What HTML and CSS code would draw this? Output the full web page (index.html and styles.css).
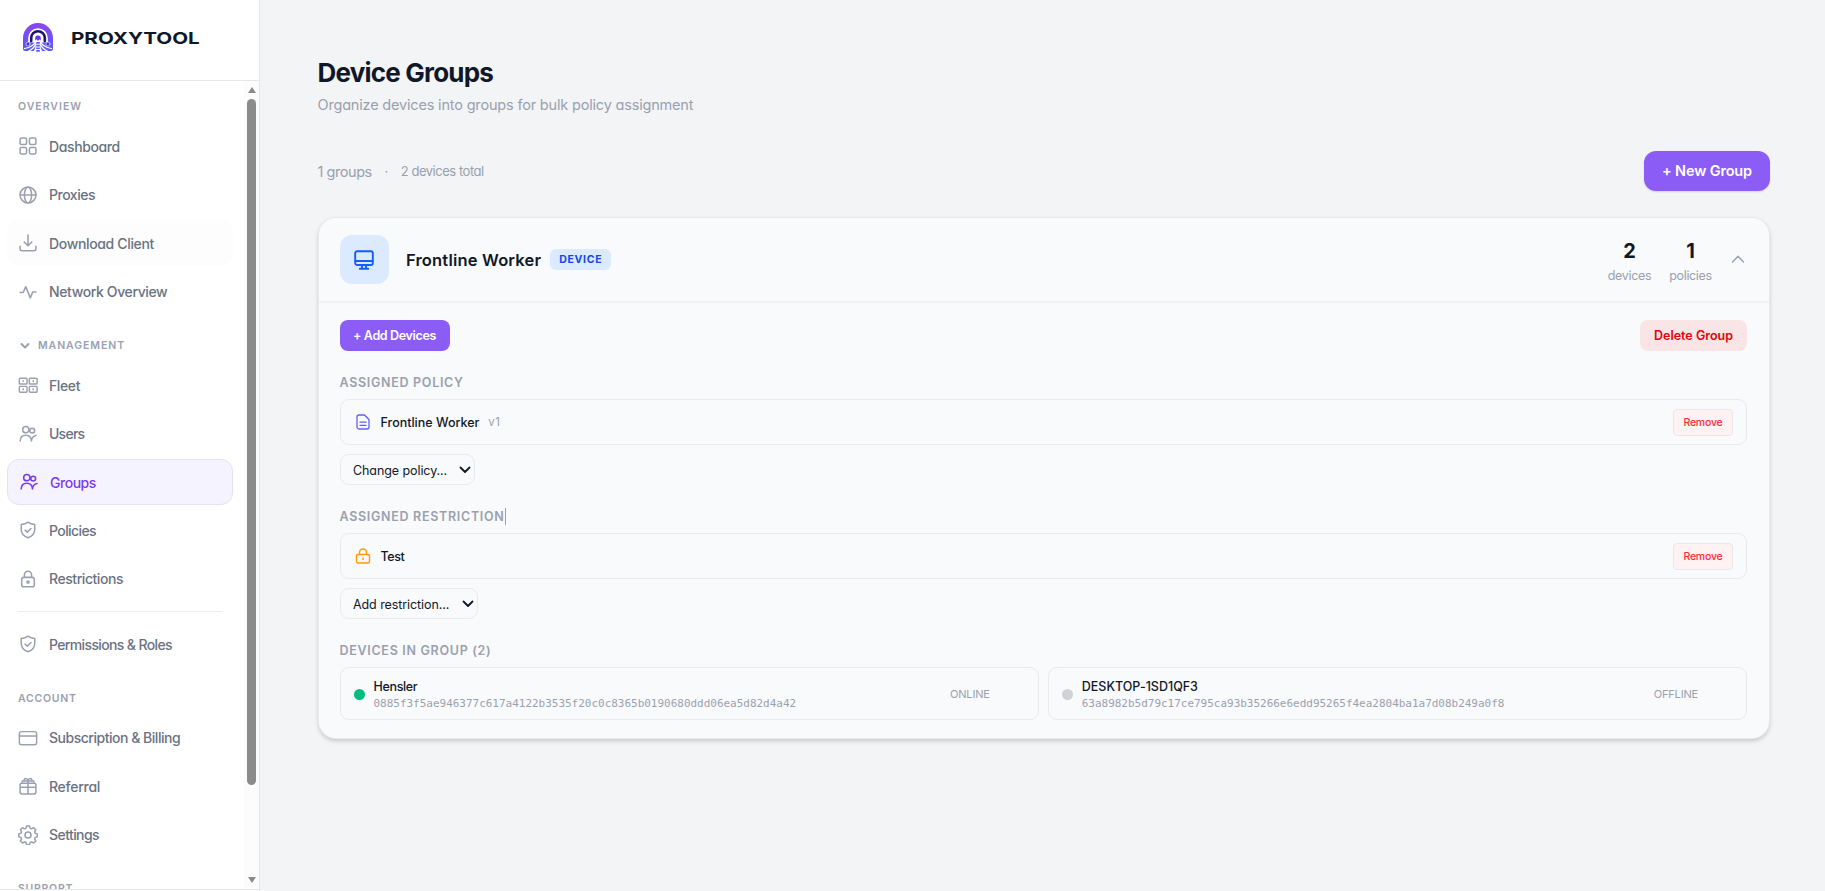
FILE: index.html
```html
<!DOCTYPE html>
<html lang="en">
<head>
<meta charset="utf-8">
<title>Device Groups</title>
<link rel="stylesheet" href="styles.css">
</head>
<body>
<svg width="0" height="0" class="defs">
  <symbol id="shield" viewBox="0 0 20 20"><path d="M10 1.300c2.200 1.600 4.500 2.300 7.500 2.500v5.700c0 4.500-2.800 7.500-7.500 9.200-4.700-1.700-7.500-4.700-7.500-9.200V3.800c3-.2 5.300-.9 7.500-2.500z"/><path d="M6.800 10.200l2.400 2.200 4.200-4"/></symbol>
  <symbol id="people" viewBox="0 0 20 20"><circle cx="7.600" cy="5.200" r="3.500"/><circle cx="14.700" cy="6.200" r="2.700"/><path d="M1.300 17.800c.2-4 2.600-6.400 6.200-6.400s6.100 2.400 6.300 6.400c.3-3.400 1.700-5.700 5.200-6.200"/></symbol>
</svg>
<div class="app">
  <aside class="sidebar">
    <div class="brand">
      <svg class="logo" viewBox="0 0 30 30"><defs><linearGradient id="lg" x1="0" y1="0" x2="0" y2="1"><stop offset="0" stop-color="#8b45f0"/><stop offset="1" stop-color="#5a5cf5"/></linearGradient></defs>
        <path d="M0 25.500V15a15 15 0 0 1 30 0v10.500q0 2.500-2.500 2.500h-25Q0 28 0 25.500z" fill="url(#lg)"/>
        <path d="M15 5.200A9.800 9.800 0 0 0 5.200 15v4l9.800 1 9.800-1v-4A9.800 9.800 0 0 0 15 5.200z" fill="#fff"/>
        <path d="M8.200 18v-3a6.800 6.800 0 0 1 13.600 0v3" fill="none" stroke="#1d1470" stroke-width="2.600"/>
        <path d="M12.200 17.500v-2.300a2.800 2.800 0 0 1 5.600 0v2.300z" fill="#6a35e8"/>
        <path d="M13.500 17C11.500 22 7 24.800 1.500 25.500M14 18C12.500 23.500 9.500 26.500 5 28.500M16.500 17c2 5 6.500 7.800 12 8.500M16 18c1.500 5.500 4.500 8.500 9 10.500" fill="none" stroke="#fff" stroke-width="1.200"/>
        <circle cx="5" cy="21" r="2" fill="#3a35c8" stroke="#fff" stroke-width=".6"/><circle cx="25" cy="21" r="2" fill="#3a35c8" stroke="#fff" stroke-width=".6"/>
        <path d="M14 19h2l3.500 10.500h-9z" fill="#fff"/>
        <path d="M15 19v10.500" fill="none" stroke="#5a5cf5" stroke-width="3.600" stroke-linecap="butt" stroke-dasharray="1.700 1"/>
      </svg>
      <span class="wordmark">PROXYTOOL</span>
    </div>
    <div class="scroller">
      <nav class="nav">
        <div class="label first"><span>OVERVIEW</span></div>
        <div class="item"><svg viewBox="0 0 20 20"><rect x="1.200" y="1.200" width="7.200" height="7.200" rx="1.600"/><rect x="11.600" y="1.200" width="7.200" height="7.200" rx="1.600"/><rect x="1.200" y="11.600" width="7.200" height="7.200" rx="1.600"/><rect x="11.600" y="11.600" width="7.200" height="7.200" rx="1.600"/></svg><span>Dashboard</span></div>
        <div class="item"><svg viewBox="0 0 20 20"><circle cx="10" cy="10" r="8.800"/><ellipse cx="10" cy="10" rx="4" ry="8.800"/><path d="M1.200 10h17.600"/></svg><span class="t-48">Proxies</span></div>
        <div class="item hover"><svg viewBox="0 0 20 20"><path d="M10 1v11.500M5.800 8.800L10 13l4.200-4.200M1.200 13.500v3.300a1.700 1.700 0 0 0 1.700 1.700h14.200a1.700 1.700 0 0 0 1.700-1.700v-3.300"/></svg><span class="t-34">Download Client</span></div>
        <div class="item"><svg viewBox="0 0 20 20"><path d="M1.200 10.500h3.500L7.500 4l5 12.500 2.800-6.500h3.500"/></svg><span>Network Overview</span></div>
        <div class="label"><svg class="caret" viewBox="0 0 10 8"><path d="M1.500 2l3.500 3.500L8.500 2"/></svg><span class="t83">MANAGEMENT</span></div>
        <div class="item"><svg class="wide" viewBox="0 0 22 20"><rect x="1.500" y="2.500" width="8.500" height="6.500" rx="1"/><rect x="12.500" y="2.500" width="8.500" height="6.500" rx="1"/><rect x="1.500" y="11.500" width="8.500" height="6.500" rx="1"/><rect x="12.500" y="11.500" width="8.500" height="6.500" rx="1"/><path d="M5.700 5.200v1M16.700 5.200v1M5.700 14.200v1M16.700 14.200v1"/></svg><span>Fleet</span></div>
        <div class="item"><svg><use href="#people"/></svg><span class="t-75">Users</span></div>
        <div class="item active"><svg><use href="#people"/></svg><span class="t-48">Groups</span></div>
        <div class="item"><svg><use href="#shield"/></svg><span class="t-60">Policies</span></div>
        <div class="item"><svg viewBox="0 0 20 20"><rect x="3" y="8.200" width="14" height="10.500" rx="2.400"/><path d="M6 8V5.300a4 4 0 0 1 8 0V8"/><circle cx="10" cy="13.300" r="1.200"/></svg><span class="t-44">Restrictions</span></div>
        <div class="rule"></div>
        <div class="item"><svg><use href="#shield"/></svg><span class="t-63">Permissions &amp; Roles</span></div>
        <div class="label"><span class="t66">ACCOUNT</span></div>
        <div class="item"><svg class="wide" viewBox="0 0 22 20"><rect x="1.500" y="3" width="19" height="14.500" rx="2.500"/><path d="M1.500 7.700h19"/></svg><span class="t-48">Subscription &amp; Billing</span></div>
        <div class="item"><svg viewBox="0 0 20 20"><path d="M3.200 7h13.600a2 2 0 0 1 2 2v7.800a2 2 0 0 1-2 2H3.200a2 2 0 0 1-2-2V9a2 2 0 0 1 2-2zM1.200 11.500h17.600M10 3.500v15M3.500 6.800V4.500h13v2.300M10 3.800C9 .8 5.700.8 5.700 4M10 3.800C11 .8 14.300.8 14.300 4"/></svg><span class="t-27">Referral</span></div>
        <div class="item"><svg class="wide" viewBox="0 0 20 20"><circle cx="10" cy="10" r="3"/><path d="M8.500 1.200h3l.6 2.300 1.600.7 2.100-1.200 2.200 2.200-1.200 2.100.6 1.600 2.300.6v3l-2.300.6-.6 1.600 1.200 2.100-2.200 2.200-2.100-1.200-1.600.7-.6 2.300h-3l-.6-2.300-1.600-.7-2.100 1.200L2 16.800l1.200-2.100-.7-1.600-2.200-.6v-3l2.200-.6.700-1.600L2 5.200 4.200 3l2.100 1.200 1.600-.7z" transform="translate(.5 -.2) scale(.96)"/></svg><span class="t-57">Settings</span></div>
        <div class="label"><span class="t66">SUPPORT</span></div>
      </nav>
      <div class="bar"><i class="up"></i><b class="thumb"></b><i class="down"></i></div>
    </div>
    <div class="foot"></div>
  </aside>
  <main class="main">
    <h1>Device Groups</h1>
    <p class="sub">Organize devices into groups for bulk policy assignment</p>
    <div class="toolbar">
      <span class="count">1 groups</span><span class="mid">·</span><span class="total">2 devices total</span>
      <button class="btn big">+ New Group</button>
    </div>
    <section class="card">
      <header class="head">
        <div class="tile"><svg viewBox="0 0 20 20"><rect x="1.200" y="1.200" width="17.600" height="13.800" rx="2"/><path d="M1.500 11h17M8 15.200v3M12 15.200v3M5.800 18.700h8.400"/></svg></div>
        <h2>Frontline Worker</h2>
        <span class="badge">DEVICE</span>
        <div class="stat"><b>2</b><span>devices</span></div>
        <div class="stat"><b>1</b><span>policies</span></div>
        <svg class="chev" viewBox="0 0 14 10"><path d="M1.500 8L7 2.300 12.500 8"/></svg>
      </header>
      <div class="body">
        <div class="actions"><button class="btn">+ Add Devices</button><button class="del">Delete Group</button></div>
        <h3>ASSIGNED POLICY</h3>
        <div class="row"><svg class="doc" viewBox="0 0 14 16"><path d="M3 1h5.500L13 5.500V13a2 2 0 0 1-2 2H3a2 2 0 0 1-2-2V3a2 2 0 0 1 2-2zM4 8.200h6M4 11.300h6"/></svg><span class="name">Frontline Worker</span><span class="ver">v1</span><button class="rm">Remove</button></div>
        <div class="select policy"><span>Change policy...</span><svg viewBox="0 0 12 8"><path d="M1.500 1.500L6 6l4.500-4.500"/></svg></div>
        <h3 class="editing">ASSIGNED RESTRICTION<i></i></h3>
        <div class="row"><svg class="lock" viewBox="0 0 16 16"><rect x="1.500" y="6.500" width="13" height="8.500" rx="1.500"/><path d="M4.500 6.500V4.500a3.500 3.500 0 0 1 7 0v2M8 10v1.500"/></svg><span class="name t-38">Test</span><button class="rm">Remove</button></div>
        <div class="select restriction"><span>Add restriction...</span><svg viewBox="0 0 12 8"><path d="M1.500 1.500L6 6l4.500-4.500"/></svg></div>
        <h3>DEVICES IN GROUP (2)</h3>
        <div class="devices">
          <div class="device"><i class="dot on"></i><div class="who"><span class="name t-34">Hensler</span><code>0885f3f5ae946377c617a4122b3535f20c0c8365b0190680ddd06ea5d82d4a42</code></div><span class="state">ONLINE</span></div>
          <div class="device"><i class="dot"></i><div class="who"><span class="name">DESKTOP-1SD1QF3</span><code>63a8982b5d79c17ce795ca93b35266e6edd95265f4ea2804ba1a7d08b249a0f8</code></div><span class="state">OFFLINE</span></div>
        </div>
      </div>
    </section>
  </main>
</div>
</body>
</html>
```
FILE: styles.css
```css
* { box-sizing: border-box; margin: 0; }
body { font-family: Inter, "Liberation Sans", sans-serif; font-feature-settings: "cv11", "calt" 0; color: #101828; background: #f3f4f6; }
.defs { display: block; position: absolute; }
svg { fill: none; stroke: currentColor; stroke-width: 1.7; stroke-linecap: round; stroke-linejoin: round; flex: none; }
span { white-space: nowrap; }
.app { display: flex; height: 891px; overflow: hidden; }
.sidebar { width: 260px; background: #fff; border-right: 1px solid #e5e7eb; display: flex; flex-direction: column; }
.brand { height: 81px; border-bottom: 1px solid #e5e7eb; display: flex; align-items: center; padding: 0 0 5px 23px; gap: 18px; flex: none; }
.logo { width: 30px; height: 30px; stroke: none; }
.wordmark { font-size: 16.500px; font-weight: 650; line-height: 20px; transform: scaleX(1.250); transform-origin: left; }
.scroller { flex: 1; display: flex; overflow: hidden; }
.nav { width: 244px; padding: 0 11px 0 7px; }
.label { height: 45.200px; display: flex; align-items: flex-end; padding: 0 0 9px 11px; font-size: 10.500px; font-weight: 600; line-height: 14px; letter-spacing: 1.010px; color: #99a1af; }
.label.first { height: 42.300px; }
.label .caret { width: 10px; height: 8px; margin: 0 8px 3px 2px; stroke-width: 2; }
.item { height: 46.400px; margin-bottom: 2px; border: 1px solid transparent; border-radius: 12px; display: flex; align-items: center; padding-left: 10px; font-size: 14px; font-weight: 500; letter-spacing: -.38px; color: #6a7282; }
.item svg { width: 20px; height: 20px; margin-right: 11px; padding: 1px; color: #99a1af; }
.item svg.wide { padding: 0; stroke-width: 1.600; }
.item.active { background: #f5f3ff; border-color: #e5e2f2; color: #7c3aed; padding-left: 11px; }
.item.active svg { color: #7c3aed; }
.item.hover { background: #fdfdfe; }
.item .t-27 { letter-spacing: -.27px; }
.item .t-34, .name.t-34 { letter-spacing: -.34px; }
.name.t-38 { letter-spacing: -.38px; }
.item .t-44 { letter-spacing: -.44px; }
.item .t-48 { letter-spacing: -.48px; }
.item .t-57 { letter-spacing: -.57px; }
.item .t-60 { letter-spacing: -.6px; }
.item .t-63 { letter-spacing: -.63px; }
.item .t-75 { letter-spacing: -.75px; }
.label .t66 { letter-spacing: .750px; }
.label .t83 { letter-spacing: .930px; }
.rule { height: 1px; margin: 9px 11px 9px 11px; background: #eceef1; }
.bar { width: 15px; background: #fcfcfc; display: flex; flex-direction: column; align-items: center; padding: 6px 0 6px; }
.bar i { border: 4px solid transparent; }
.bar .up { border-top: 0; border-bottom: 6px solid #8b8b8b; }
.bar .down { border-bottom: 0; border-top: 6px solid #8b8b8b; margin-top: auto; }
.thumb { width: 9px; height: 686px; margin-top: 6px; border-radius: 5px; background: #8b8b8b; }
.foot { height: 2px; border-top: 1px solid #e5e7eb; flex: none; }
.main { flex: 1; padding: 56px 55px 0 57.500px; }
h1 { font-size: 26px; line-height: 34px; font-weight: 650; letter-spacing: -.8px; }
.sub { font-size: 14.500px; line-height: 22px; margin-top: 4px; letter-spacing: -.18px; color: #99a1af; }
.toolbar { display: flex; align-items: center; height: 40px; margin-top: 35px; color: #99a1af; }
.count { font-size: 14.500px; letter-spacing: -.45px; }
.mid { width: 29px; text-align: center; font-size: 13px; }
.total { font-size: 13px; letter-spacing: -.47px; }
button { font: inherit; font-feature-settings: inherit; border: 0; padding: 0; white-space: nowrap; }
.btn { background: #8b5cf6; color: #fff; font-weight: 600; font-size: 12.500px; letter-spacing: -.35px; width: 110px; height: 31px; border-radius: 8px; }
.btn.big { width: 126px; height: 40px; padding-bottom: 1px; border-radius: 12px; font-size: 14.500px; letter-spacing: -.15px; margin-left: auto; box-shadow: 0 1px 2px rgba(0,0,0,.12); }
.card { margin-top: 26px; height: 522px; border: 1px solid #e8eaee; border-radius: 18px; background: #f9fafc; box-shadow: 0 3px 5px -1px rgba(0,0,0,.16), 0 1px 4px rgba(0,0,0,.05); }
.head { height: 85px; border-bottom: 2px solid #f0f1f3; display: flex; align-items: center; padding: 0 24px 0 21px; }
.tile { width: 49px; height: 49px; border-radius: 12px; background: #dbeafe; color: #155dfc; display: grid; place-items: center; margin-right: 17.500px; }
.tile svg { width: 20px; height: 20px; stroke-width: 1.900; }
h2 { font-size: 16.500px; font-weight: 600; letter-spacing: .180px; }
.badge { margin: 0 auto 0 9px; width: 61px; height: 21px; border-radius: 6px; background: #dbeafe; color: #1447e6; font-size: 10.500px; font-weight: 650; letter-spacing: .680px; display: grid; place-items: center; }
.stat { width: 43px; margin-left: 18px; display: flex; flex-direction: column; align-items: center; font-size: 12.500px; line-height: 17px; letter-spacing: -.34px; color: #99a1af; padding-top: 2px; }
.stat b { font-size: 20px; line-height: 26px; font-weight: 650; color: #101828; margin-bottom: 3px; }
.chev { width: 14px; height: 10px; margin: 0 0 1px 19px; stroke-width: 1.400; color: #99a1af; }
.body { padding: 17px 22px 0 21px; }
.actions { display: flex; justify-content: space-between; }
.del { width: 107px; height: 31px; border-radius: 8px; background: #fae5e6; color: #e7000b; font-size: 12.500px; font-weight: 600; }
h3 { height: 17px; margin: 23px 0 8px; line-height: 17px; font-size: 12.500px; font-weight: 600; letter-spacing: .7px; color: #99a1af; }
.row { height: 46px; border: 1px solid #e8eaee; border-radius: 9px; display: flex; align-items: center; padding: 0 13px 0 15px; font-size: 12.500px; }
.doc { width: 14px; height: 16px; color: #615fff; margin: 0 11px 0 0; stroke-width: 1.300; }
.lock { width: 16px; height: 16px; color: #fe9a00; margin: 0 10px 0 -1px; stroke-width: 1.400; }
.name { font-weight: 500; font-size: 12.500px; }
.ver { margin-left: 9px; font-size: 11.500px; letter-spacing: .4px; color: #99a1af; }
.rm { margin-left: auto; width: 60px; height: 27px; border: 1px solid #eae6ea; border-radius: 4px; background: #fef2f2; color: #fb2c36; font-size: 10.500px; font-weight: 500; letter-spacing: -.2px; }
.select { margin-top: 9px; height: 31px; border: 1px solid #e8eaee; border-radius: 9px; display: flex; align-items: center; justify-content: space-between; padding: 1px 3px 0 12.500px; font-size: 12.500px; letter-spacing: -.08px; }
.select svg { width: 12px; height: 8px; stroke-width: 1.800; }
.policy { width: 135px; }
.restriction { width: 138px; }
.editing { display: flex; }
.editing i { width: 1px; background: #99a1af; }
.devices { display: grid; grid-template-columns: 1fr 1fr; gap: 9px; }
.device { height: 53px; border: 1px solid #e8eaee; border-radius: 9px; display: flex; align-items: center; padding: 1px 48px 0 13px; }
.dot { width: 11px; height: 11px; border-radius: 50%; background: #d1d1d6; margin-right: 9px; }
.dot.on { background: #00bc7d; }
.who { display: flex; flex-direction: column; align-items: flex-start; margin-right: auto; line-height: 17px; padding-top: 1px; }
code { font: 10.970px/17px "DejaVu Sans Mono", monospace; color: #99a1af; }
.state { font-size: 11px; letter-spacing: -.17px; color: #99a1af; }
```
